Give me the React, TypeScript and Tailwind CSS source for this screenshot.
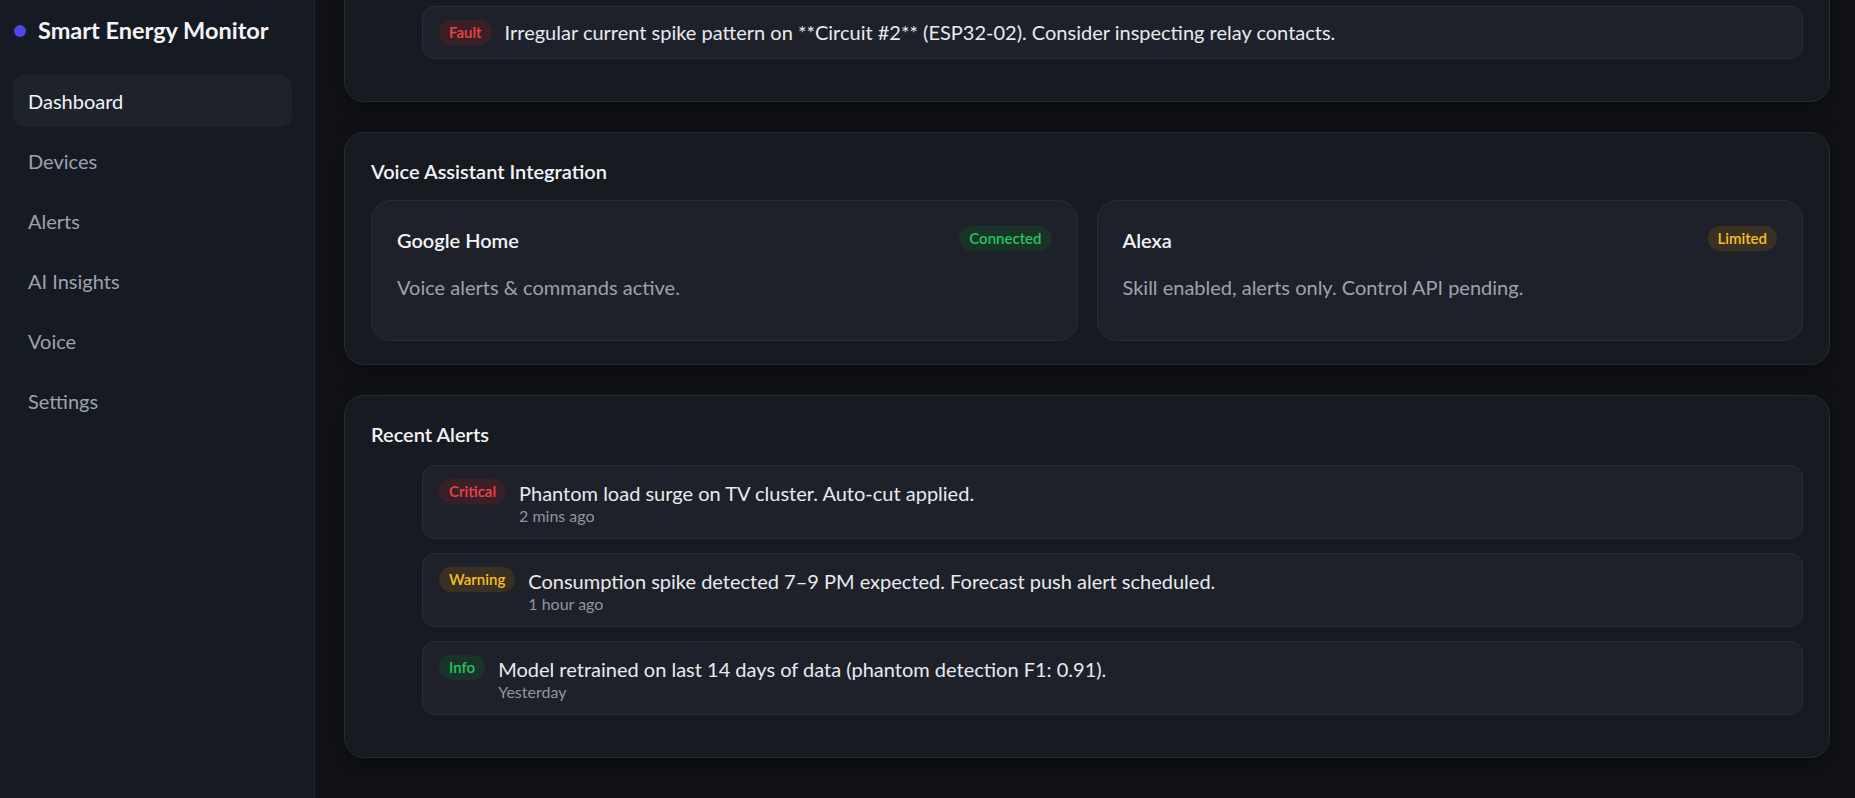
const navItems = ["Dashboard", "Devices", "Alerts", "AI Insights", "Voice", "Settings"]

type Tone = "red" | "amber" | "green"

const toneClass: Record<Tone, string> = {
  red: "bg-[#3a2026] text-[#ef4444]",
  amber: "bg-[#3a3122] text-[#fbbf24]",
  green: "bg-[#1a3328] text-[#22c55e]",
}

function Badge({ tone, label }: { tone: Tone; label: string }) {
  return (
    <span
      className={`inline-flex h-[25px] shrink-0 items-center rounded-full px-[10px] text-[15px] font-semibold ${toneClass[tone]}`}
    >
      {label}
    </span>
  )
}

type AlertRow = { tone: Tone; label: string; text: string; time?: string }

function AlertItem({ tone, label, text, time }: AlertRow) {
  return (
    <li className="flex items-start gap-[13px] rounded-[13px] border border-[#2a2e37] bg-[#1e2129] px-[16px] py-[13px]">
      <Badge tone={tone} label={label} />
      <div className="flex flex-col">
        <span className={`text-[20px] text-[#e8eaee] ${time ? "leading-[28px]" : "leading-[25px]"}`}>{text}</span>
        {time && <span className="text-[16px] leading-[18px] text-[#8f96a3]">{time}</span>}
      </div>
    </li>
  )
}

function Card({ children, className = "" }: { children: React.ReactNode; className?: string }) {
  return (
    <section
      className={`rounded-[20px] border border-[#272b34] bg-[#171a21] px-[26px] pt-[25px] shadow-[0_8px_24px_rgba(0,0,0,0.35)] ${className}`}
    >
      {children}
    </section>
  )
}

const insights: AlertRow[] = [
  { tone: "amber", label: "Forecast", text: "Tomorrow's usage is projected 12% higher than the weekly average." },
  { tone: "green", label: "Saving", text: "Shifting dishwasher runs to off-peak could save about ₹240/month." },
  {
    tone: "red",
    label: "Fault",
    text: "Irregular current spike pattern on **Circuit #2** (ESP32-02). Consider inspecting relay contacts.",
  },
]

const alerts: AlertRow[] = [
  { tone: "red", label: "Critical", text: "Phantom load surge on TV cluster. Auto-cut applied.", time: "2 mins ago" },
  {
    tone: "amber",
    label: "Warning",
    text: "Consumption spike detected 7–9 PM expected. Forecast push alert scheduled.",
    time: "1 hour ago",
  },
  {
    tone: "green",
    label: "Info",
    text: "Model retrained on last 14 days of data (phantom detection F1: 0.91).",
    time: "Yesterday",
  },
]

const assistants = [
  { name: "Google Home", tone: "green" as Tone, status: "Connected", desc: "Voice alerts & commands active." },
  { name: "Alexa", tone: "amber" as Tone, status: "Limited", desc: "Skill enabled, alerts only. Control API pending." },
]

export default function App() {
  return (
    <div className="flex h-screen overflow-hidden bg-[#111217] font-['Lato',sans-serif] text-[#e8eaee]">
      {/* Sidebar */}
      <aside className="flex h-full w-[315px] shrink-0 flex-col border-r border-[#23262e] bg-[#161a22] p-[13px]">
        <div className="flex h-[36px] items-center gap-[12px] pl-[1px]">
          <span className="h-[12px] w-[12px] rounded-full bg-[#4f46e5]" />
          <span className="text-[23.5px] font-bold text-[#f3f4f6]">Smart Energy Monitor</span>
        </div>
        <nav className="mt-[26px] flex w-[279px] flex-col gap-[8px]">
          {navItems.map((item, i) => (
            <div
              key={item}
              className={`flex h-[52px] items-center rounded-[12px] px-[15px] text-[20px] ${
                i === 0 ? "bg-[#1e222b] text-[#f3f4f6]" : "text-[#9ca3af]"
              }`}
            >
              {item}
            </div>
          ))}
        </nav>
      </aside>

      {/* Main content, scrolled to the bottom */}
      <main className="flex h-full flex-1 flex-col justify-end gap-[30px] overflow-hidden pb-[40px] pl-[29px] pr-[25px]">
        <Card className="shrink-0 pb-[42px]">
          <h2 className="mb-[18px] text-[20px] font-semibold leading-[26px] text-[#f3f4f6]">AI Insights</h2>
          <ul className="flex flex-col gap-[14px] pl-[51px]">
            {insights.map((a) => (
              <AlertItem key={a.label} {...a} />
            ))}
          </ul>
        </Card>

        <Card className="shrink-0 pb-[23px]">
          <h2 className="mb-[16px] text-[20px] font-semibold leading-[26px] text-[#f3f4f6]">
            Voice Assistant Integration
          </h2>
          <div className="grid grid-cols-2 gap-[19px]">
            {assistants.map((a) => (
              <div key={a.name} className="rounded-[20px] border border-[#2a2e37] bg-[#1e2129] px-[25px] pt-[25px] pb-[25px]">
                <div className="flex items-start justify-between">
                  <span className="text-[20px] font-semibold leading-[28px] text-[#f3f4f6]">{a.name}</span>
                  <Badge tone={a.tone} label={a.status} />
                </div>
                <p className="mt-[18px] mb-[13px] text-[20px] leading-[30px] text-[#9ca3af]">{a.desc}</p>
              </div>
            ))}
          </div>
        </Card>

        <Card className="shrink-0 pb-[42px]">
          <h2 className="mb-[18px] text-[20px] font-semibold leading-[26px] text-[#f3f4f6]">Recent Alerts</h2>
          <ul className="flex flex-col gap-[14px] pl-[51px]">
            {alerts.map((a) => (
              <AlertItem key={a.label} {...a} />
            ))}
          </ul>
        </Card>
      </main>
    </div>
  )
}
